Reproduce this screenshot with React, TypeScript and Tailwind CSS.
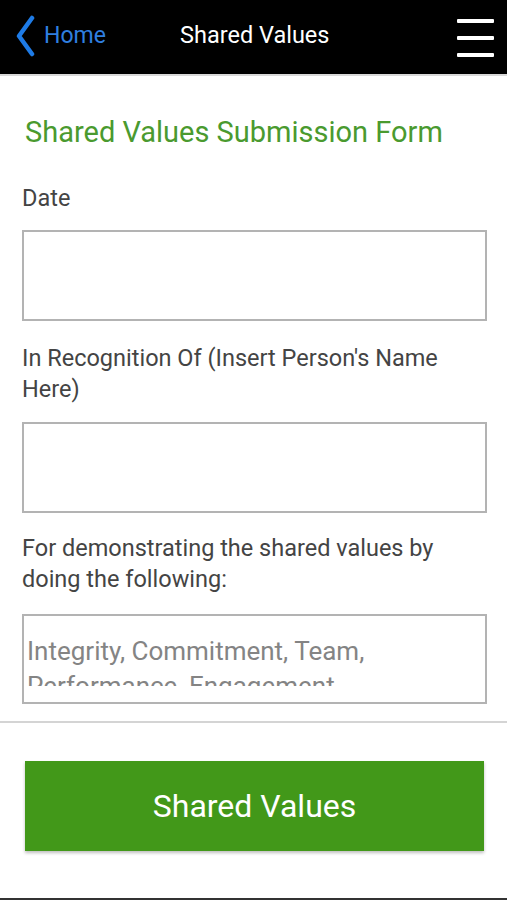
import React from "react";

export default function App() {
  const font = { fontFamily: "Roboto, 'Noto Sans', Arial, sans-serif" };
  return (
    <div style={font} className="w-[507px] h-[900px] bg-white flex flex-col overflow-hidden">
      <header className="h-[74px] bg-black flex items-center relative shrink-0">
        <div className="flex items-center pl-[15px]">
          <svg width="20" height="42" viewBox="0 0 20 42" className="shrink-0 mb-[3px]">
            <path d="M17 3 L4 21 L17 39" fill="none" stroke="#1e7be6" strokeWidth="4.5" strokeLinecap="round" strokeLinejoin="round" />
          </svg>
          <span className="text-[23px] text-[#2f7fe0] ml-[9px] leading-none mb-[3px]">Home</span>
        </div>
        <div className="absolute left-[180px] top-0 h-[74px] pb-[3px] flex items-center text-white text-[23.5px] leading-none">
          Shared Values
        </div>
        <div className="ml-auto mr-[13px] flex flex-col gap-[13px] pt-[2px]">
          <div className="w-[37px] h-[4px] bg-white rounded-[1px]" />
          <div className="w-[37px] h-[4px] bg-white rounded-[1px]" />
          <div className="w-[37px] h-[4px] bg-white rounded-[1px]" />
        </div>
      </header>
      <div className="h-[2px] bg-[#d8d8d8] shrink-0" />
      <main className="flex flex-col flex-1">
        <div className="pl-[22px] pr-[20px]">
          <h1 className="mt-[38px] text-[29px] leading-[36px] text-[#4a9a2f] font-normal pl-[3px]">
            Shared Values Submission Form
          </h1>
          <div className="mt-[32px] text-[23.5px] leading-[32px] text-[#444]">Date</div>
          <div className="mt-[16px] h-[91px] border-2 border-[#b3b3b3] bg-white" />
          <div className="mt-[22px] text-[23.5px] leading-[31px] text-[#444]">
            In Recognition Of (Insert Person's Name Here)
          </div>
          <div className="mt-[17px] h-[91px] border-2 border-[#b3b3b3] bg-white" />
          <div className="mt-[20px] text-[23.5px] leading-[31px] text-[#444]">
            For demonstrating the shared values by doing the following:
          </div>
          <div className="mt-[19px] h-[90px] border-2 border-[#b3b3b3] bg-white pt-[18px] px-[3px]">
            <div className="h-[52px] overflow-hidden text-[26px] leading-[35px] text-[#848484]">
              Integrity, Commitment, Team, Performance, Engagement
            </div>
          </div>
        </div>
        <div className="mt-[17px] h-[2px] bg-[#d4d4d4]" />
        <div className="px-[25px] pr-[23px] mt-[38px]">
          <button className="w-full h-[90px] bg-[#429819] text-white text-[32px] shadow-[0_2px_3px_rgba(0,0,0,0.25)] flex items-center justify-center">
            Shared Values
          </button>
        </div>
        <div className="flex-1" />
        <div className="h-[2px] bg-[#333] shrink-0" />
      </main>
    </div>
  );
}
